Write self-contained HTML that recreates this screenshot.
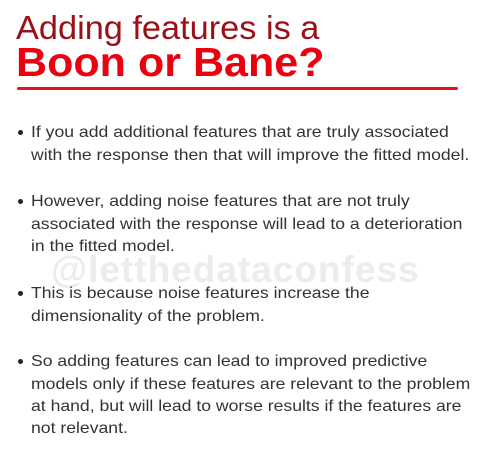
<!DOCTYPE html>
<html><head><style>
body{margin:0;width:485px;height:454px;background:#fff;position:relative;overflow:hidden;font-family:"Liberation Sans",sans-serif}
.t1{position:absolute;left:16px;top:8px;font-size:33px;color:#9b1016;line-height:40px;white-space:nowrap;transform:scaleX(1.04);transform-origin:left}
.t2{position:absolute;left:16px;top:40px;font-size:41px;font-weight:bold;color:#ec0010;line-height:44px;white-space:nowrap;transform:scaleX(1.05);transform-origin:left}
.rule{position:absolute;left:17px;top:87px;width:441px;height:3px;background:#e8111c;border-radius:2px}
.wm{position:absolute;left:51px;top:249px;font-size:37px;font-weight:bold;color:#ececec;white-space:nowrap;letter-spacing:1px}
.l{position:absolute;left:31px;font-size:16px;color:#333;line-height:22px;white-space:nowrap;transform:scaleX(1.1);transform-origin:left}
.d{position:absolute;left:18px;width:5px;height:5px;border-radius:50%;background:#222}
</style></head><body>
<div class="t1">Adding features is a</div>
<div class="t2">Boon or Bane?</div>
<div class="rule"></div>
<div class="wm">@letthedataconfess</div>
<div class="d" style="top:130px"></div>
<div class="l" style="top:122px">If you add additional features that are truly associated</div>
<div class="l" style="top:145px">with the response then that will improve the fitted model.</div>
<div class="d" style="top:199px"></div>
<div class="l" style="top:191px">However, adding noise features that are not truly</div>
<div class="l" style="top:214px">associated with the response will lead to a deterioration</div>
<div class="l" style="top:236px">in the fitted model.</div>
<div class="d" style="top:291px"></div>
<div class="l" style="top:283px">This is because noise features increase the</div>
<div class="l" style="top:306px">dimensionality of the problem.</div>
<div class="d" style="top:359px"></div>
<div class="l" style="top:351px">So adding features can lead to improved predictive</div>
<div class="l" style="top:374px">models only if these features are relevant to the problem</div>
<div class="l" style="top:396px">at hand, but will lead to worse results if the features are</div>
<div class="l" style="top:418px">not relevant.</div>
</body></html>
